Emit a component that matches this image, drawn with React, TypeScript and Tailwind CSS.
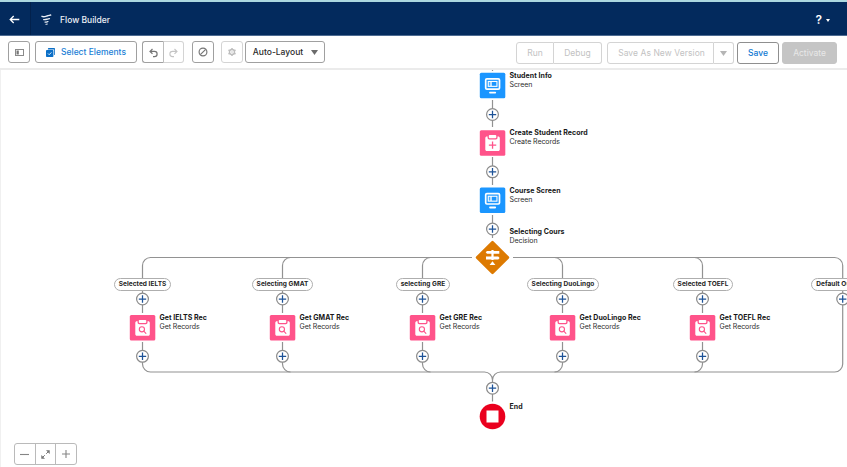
import React from "react";

const font = "font-['Inter',sans-serif]";

function Plus({ x, y }: { x: number; y: number }) {
  return (
    <g>
      <circle cx={x} cy={y} r="5.9" fill="#fff" stroke="#8a8a8a" strokeWidth="1.2" />
      <path d={`M${x - 3.7} ${y}h7.4M${x} ${y - 3.7}v7.4`} stroke="#1d5297" strokeWidth="1.25" />
    </g>
  );
}

function ScreenIcon({ x, y }: { x: number; y: number }) {
  return (
    <g transform={`translate(${x} ${y})`}>
      <rect width="25.5" height="25.5" rx="1.5" fill="#1b96ff" />
      <rect x="5.9" y="6" width="13.8" height="10.4" rx="1.2" fill="none" stroke="#fff" strokeWidth="1.7" />
      <rect x="7.9" y="8.1" width="9.8" height="6" fill="#fff" />
      <rect x="9" y="9.2" width="1.6" height="3.8" fill="#4eaeff" />
      <rect x="11.9" y="9.2" width="4.7" height="3.8" fill="#1b96ff" />
      <rect x="9.3" y="19" width="7" height="1.8" rx="0.8" fill="#fff" />
    </g>
  );
}

function RecordIcon({ x, y, create = false }: { x: number; y: number; create?: boolean }) {
  return (
    <g transform={`translate(${x} ${y})`}>
      <rect width="25.5" height="25.5" rx="1.5" fill="#ff538a" />
      <path
        d="M7 6.3h.8v1.2c0 1 .7 1.7 1.7 1.7H16c1 0 1.7-.7 1.7-1.7V6.3h.8c.8 0 1.5.7 1.5 1.5v11.4c0 .8-.7 1.5-1.5 1.5H7c-.8 0-1.5-.7-1.5-1.5V7.8c0-.8.7-1.5 1.5-1.5z"
        fill="#fff"
      />
      <rect x="9" y="4.9" width="7.5" height="3.1" rx="0.9" fill="#fff" />
      {create ? (
        <path d="M12.75 11.2v7.4M9.05 14.9h7.4" stroke="#ff538a" strokeWidth="1.3" />
      ) : (
        <g fill="none" stroke="#ff538a" strokeWidth="1.1">
          <circle cx="12.1" cy="14.3" r="2.6" />
          <path d="M14 16.2l2.1 2.1" strokeLinecap="round" />
        </g>
      )}
    </g>
  );
}

const columns = [142.5, 282.5, 422.5, 562.5, 702.5];

function Connectors() {
  return (
    <svg className="absolute left-0 top-0" width="847" height="397" viewBox="0 70 847 397">
      <g fill="none" stroke="#929292" strokeWidth="1.2">
        <path d="M492.5 70v1M492.5 100v27M492.5 157v28M492.5 215v23M492.5 380v21.5" />
        <path d="M472 257.5H150.5a8 8 0 0 0-8 8V278M513 257.5H834.7a8 8 0 0 1 8 8V364a8 8 0 0 1-8 8H500.5a8 8 0 0 0-8 8a8 8 0 0 0-8-8H150.5a8 8 0 0 1-8-8v-22" />
        <path d="M290.5 257.5a8 8 0 0 0-8 8V278M430.5 257.5a8 8 0 0 0-8 8V278M554.5 257.5a8 8 0 0 1 8 8V278M694.5 257.5a8 8 0 0 1 8 8V278" />
        <path d="M282.5 342v22a8 8 0 0 0 8 8M422.5 342v22a8 8 0 0 0 8 8M562.5 342v22a8 8 0 0 1-8 8M702.5 342v22a8 8 0 0 1-8 8" />
        {columns.map((x) => (
          <path key={x} d={`M${x} 290v23`} />
        ))}
      </g>
      <ScreenIcon x={479.8} y={72.8} />
      <RecordIcon x={479.8} y={130.2} create />
      <ScreenIcon x={479.8} y={187.6} />
      <rect x="480.3" y="245.3" width="24.4" height="24.4" rx="1.3" fill="#dd7a01" transform="rotate(45 492.5 257.5)" />
      <g fill="#fff">
        <path d="M487 250.9h12.3v2.9H487l-1.3-1.45zM486 256.4h12.3l1.3 1.5-1.3 1.5H486z" />
        <path d="M491.4 250h2.2v10h-2.2zM492.5 261.2l2.9 3.7h-5.8z" />
      </g>
      {[114.5, 171.8, 229, 388.2].map((y) => (
        <Plus key={y} x={492.5} y={y} />
      ))}
      {columns.map((x) => (
        <g key={x}>
          <Plus x={x} y={299} />
          <Plus x={x} y={356.3} />
          <RecordIcon x={x - 12.7} y={315} />
        </g>
      ))}
      <Plus x={842.7} y={299} />
      <circle cx="492.5" cy="416.5" r="12.8" fill="#ea001e" />
      <rect x="486.5" y="410.5" width="12" height="12" fill="#fff" />
    </svg>
  );
}

function NodeLabel({ x, y, title, kind }: { x: number; y: number; title: string; kind?: string }) {
  return (
    <div className="absolute whitespace-nowrap text-[7px] leading-[9px] text-[#181818]" style={{ left: x, top: y - 70 }}>
      <div className="font-bold tracking-[0.04px]">{title}</div>
      {kind && <div className="tracking-[-0.06px] text-[#2e2e2e]">{kind}</div>}
    </div>
  );
}

function Pill({ x, w, text }: { x: number; w: number; text: string }) {
  return (
    <div
      className="absolute top-[208px] flex h-[13px] items-center justify-center whitespace-nowrap rounded-full border border-[#aeaeae] bg-white text-[6.5px] font-bold tracking-[0.06px] text-[#242424]"
      style={{ left: x, width: w }}
    >
      {text}
    </div>
  );
}

const btn = "flex h-[22px] shrink-0 items-center justify-center rounded-[3px] border";

export default function App() {
  return (
    <div className={`flex h-[467px] w-[847px] flex-col overflow-hidden bg-white ${font}`}>
      <header className="flex h-9 shrink-0 items-center border-b border-t-[2px] border-b-[#4d6b92] border-t-[#acd8e0] bg-[#032a5d] text-white">
        <div className="flex h-full w-[31px] items-center justify-center border-r border-[#02214c]">
          <svg className="ml-[-2px] mt-px" width="11" height="9" viewBox="0 0 11 9" fill="none" stroke="white" strokeWidth="1.3">
            <path d="M10.3 4.5H1M4.7 1L1.2 4.5L4.7 8" />
          </svg>
        </div>
        <svg className="ml-[10px] mt-px" width="11" height="11" viewBox="0 0 11 11" fill="none" stroke="#e8edf4" strokeLinecap="round">
          <path d="M1 2.3c1.6.9 3.4.2 5-.3 1.4-.4 2.4-.6 3.6-.9" strokeWidth="1.5" />
          <path d="M2.7 5.6c1.4.3 2.6-.2 3.7-.5l2-.5" strokeWidth="1.4" />
          <path d="M4 8.1c1 .1 1.8-.2 3-.6" strokeWidth="1.2" />
          <path d="M4.9 10.3l1.4-.2" strokeWidth="1" />
        </svg>
        <h1 className="ml-[8px] mt-[2px] text-[8.5px] font-medium leading-3 text-[#edf1f6]">Flow Builder</h1>
        <div className="ml-auto mr-[17px] mt-[3px] flex items-center gap-[4px] text-[12px] font-semibold leading-3">
          ?
          <svg width="4" height="3" viewBox="0 0 4 3" fill="white">
            <path d="M0 0h4L2 3z" />
          </svg>
        </div>
      </header>
      <div className="flex h-[34px] shrink-0 items-start border-b-2 border-[#ebebeb] pl-[8px] pr-[10px] pt-[5px] text-[8.5px]">
        <div className={`${btn} w-[22px] border-[#a0a0a0]`}>
          <svg width="9" height="7" viewBox="0 0 9 7">
            <rect x=".5" y=".5" width="8" height="6" fill="none" stroke="#8a8a8a" />
            <path d="M1.5 1.5h2.3v4H1.5z" fill="#777" />
          </svg>
        </div>
        <div className={`${btn} ml-[5px] w-[102px] gap-[6px] border-[#a0a0a0] font-medium text-[#1b80d6]`}>
          <svg width="9" height="9" viewBox="0 0 9 9">
            <path d="M2.7 0h5.5c.5 0 .8.3.8.8v5.6c0 .4-.3.7-.8.7V1.5H1.9V.8c0-.5.3-.8.8-.8z" fill="#0b6fc7" />
            <rect y="2" width="7.4" height="7" rx=".8" fill="#0b6fc7" />
            <path d="M2 5.5l1.2 1.2L5.4 4.4" fill="none" stroke="white" strokeWidth=".9" />
          </svg>
          <span>Select Elements</span>
        </div>
        <div className="ml-[5px] flex">
          <div className={`${btn} w-[22px] rounded-r-none border-[#a0a0a0] border-r-[#bdbdbd]`}>
            <svg className="mt-px" width="9" height="10" viewBox="0 0 9 10" fill="none" stroke="#747474" strokeWidth="1.2">
              <path d="M3.5 1L1 3.4L3.5 5.8M1 3.4h4.5a2.6 2.6 0 0 1 0 5.2H4" />
            </svg>
          </div>
          <div className={`${btn} w-[20px] rounded-l-none border-l-0 border-[#d4d4d4]`}>
            <svg className="mt-px" width="9" height="10" viewBox="0 0 9 10" fill="none" stroke="#c4c4c4" strokeWidth="1.1">
              <path d="M5.5 1L8 3.4L5.5 5.8M8 3.4H3.5a2.6 2.6 0 0 0 0 5.2H5" />
            </svg>
          </div>
        </div>
        <div className={`${btn} ml-[8px] w-[22px] border-[#a0a0a0]`}>
          <svg width="10" height="10" viewBox="0 0 10 10" fill="none" stroke="#747474" strokeWidth="1.15">
            <circle cx="5" cy="5" r="3.9" />
            <path d="M7.7 2.3L2.3 7.7" />
          </svg>
        </div>
        <div className={`${btn} ml-[7px] w-[22px] border-[#d4d4d4]`}>
          <svg width="10" height="10" viewBox="0 0 10 10" fill="none" stroke="#bdbdbd">
            <circle cx="5" cy="5" r="2.5" strokeWidth="1.4" />
            <path d="M5 1v1.4M5 7.6V9M1.5 3l1.3.8M7.2 6.2l1.3.8M1.5 7l1.3-.8M7.2 3.8L8.5 3" strokeWidth="1.5" />
            <circle cx="5" cy="5" r=".7" fill="#bdbdbd" stroke="none" />
          </svg>
        </div>
        <div className={`${btn} ml-[2px] w-[80px] gap-[8px] border-[#a0a0a0] pl-px font-medium text-[#2b2b2b]`}>
          <span>Auto-Layout</span>
          <svg width="7" height="5" viewBox="0 0 7 5" fill="#6b6b6b">
            <path d="M0 0h7L3.5 5z" />
          </svg>
        </div>
        <div className="ml-auto mt-px flex text-[#c2c2c2]">
          <div className={`${btn} h-[21px] w-[38px] rounded-r-none border-[#d4d4d4]`}>Run</div>
          <div className={`${btn} h-[21px] w-[48px] rounded-l-none border-l-0 border-[#d4d4d4]`}>Debug</div>
          <div className={`${btn} ml-[5px] h-[21px] w-[107px] rounded-r-none border-[#d4d4d4] pl-[2px] tracking-[0.06px]`}>Save As New Version</div>
          <div className={`${btn} h-[21px] w-[20px] rounded-l-none border-l-0 border-[#d4d4d4]`}>
            <svg width="7" height="5" viewBox="0 0 7 5" fill="#b5b5b5">
              <path d="M0 0h7L3.5 5z" />
            </svg>
          </div>
          <div className={`${btn} ml-[3px] h-[21px] w-[42px] border-[#8f8f8f] font-medium text-[#0f79d2]`}>Save</div>
          <div className={`${btn} ml-[3px] h-[21px] w-[55px] border-[#c5c5c5] bg-[#c5c5c5] text-[#e8e8e8]`}>Activate</div>
        </div>
      </div>
      <main className="relative h-[397px] overflow-hidden border-l border-[#f0f0f0]">
        <div className="absolute -left-px top-0 h-[397px] w-[847px]">
          <Connectors />
          <NodeLabel x={509.5} y={71} title="Student Info" kind="Screen" />
          <NodeLabel x={509.5} y={128.3} title="Create Student Record" kind="Create Records" />
          <NodeLabel x={509.5} y={185.6} title="Course Screen" kind="Screen" />
          <NodeLabel x={509.5} y={227} title="Selecting Cours" kind="Decision" />
          <NodeLabel x={159.5} y={313} title="Get IELTS Rec" kind="Get Records" />
          <NodeLabel x={299.5} y={313} title="Get GMAT Rec" kind="Get Records" />
          <NodeLabel x={439.5} y={313} title="Get GRE Rec" kind="Get Records" />
          <NodeLabel x={579.5} y={313} title="Get DuoLingo Rec" kind="Get Records" />
          <NodeLabel x={719.5} y={313} title="Get TOEFL Rec" kind="Get Records" />
          <NodeLabel x={509.5} y={402.3} title="End" />
          <Pill x={114} w={57} text="Selected IELTS" />
          <Pill x={252} w={61} text="Selecting GMAT" />
          <Pill x={396} w={54} text="selecting GRE" />
          <Pill x={527} w={72} text="Selecting DuoLingo" />
          <Pill x={673} w={60} text="Selected TOEFL" />
          <Pill x={811} w={65} text="Default Outcome" />
          <div className="absolute left-[14px] top-[373px] flex h-[22px] w-[63px] rounded-[3px] border border-[#bababa] bg-white">
            <div className="flex flex-1 items-center justify-center border-r border-[#bababa]">
              <svg width="9" height="9" viewBox="0 0 9 9" stroke="#858585" strokeWidth="1.1">
                <path d="M0 4.5h9" />
              </svg>
            </div>
            <div className="flex flex-1 items-center justify-center border-r border-[#bababa]">
              <svg width="9" height="9" viewBox="0 0 9 9" fill="#747474" stroke="#747474">
                <path d="M5 .3h3.7V4zM.3 5v3.7H4z" stroke="none" />
                <path d="M5.2 3.8L7.3 1.7M3.8 5.2L1.7 7.3" />
              </svg>
            </div>
            <div className="flex flex-1 items-center justify-center">
              <svg width="8" height="8" viewBox="0 0 8 8" stroke="#858585" strokeWidth="1.1">
                <path d="M0 4h8M4 0v8" />
              </svg>
            </div>
          </div>
        </div>
      </main>
    </div>
  );
}
